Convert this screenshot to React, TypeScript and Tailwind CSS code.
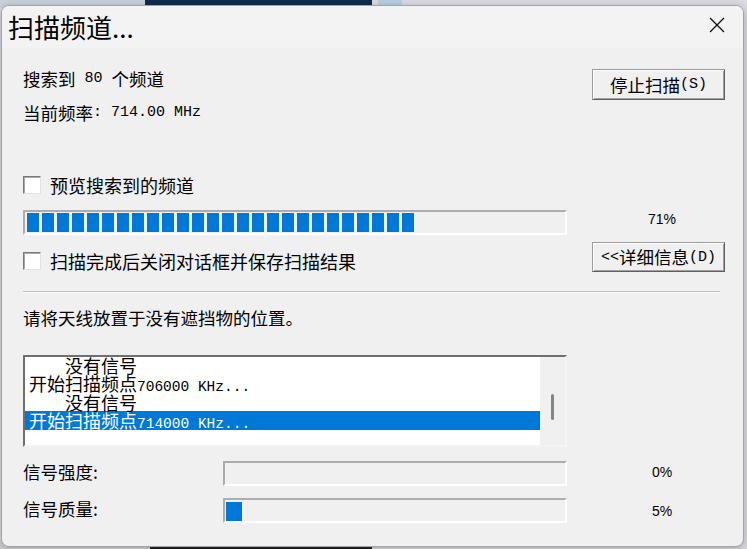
import type { ReactNode } from "react";

const cjk = "font-['Noto_Sans_CJK_SC','Microsoft_YaHei',sans-serif]";
const mono = "font-['Liberation_Mono','Noto_Sans_CJK_SC',monospace]";

function Checkbox() {
  return (
    <span className="block w-[18px] h-[18px] shrink-0 bg-white border border-t-[#7a7a7a] border-l-[#7a7a7a] border-b-[#e2e2e2] border-r-[#e2e2e2] shadow-[inset_1px_1px_0_#a8a8a8]" />
  );
}

function Btn({ children, h }: { children: ReactNode; h: string }) {
  return (
    <button
      className={`w-[133px] ${h} shrink-0 flex items-center justify-center bg-[#f0f0f0] border border-t-[#9c9c9c] border-l-[#9c9c9c] border-b-[#5f5f5f] border-r-[#5f5f5f] shadow-[inset_1px_1px_0_#ffffff,inset_-1px_-1px_0_#a0a0a0] text-[17.5px] leading-none text-black`}
    >
      {children}
    </button>
  );
}

function Pct({ value, extra = "" }: { value: string; extra?: string }) {
  return (
    <span
      className={`block ml-[75px] w-[40px] text-center text-[14px] leading-[14px] text-black font-['Liberation_Sans',sans-serif] ${extra}`}
    >
      {value}
    </span>
  );
}

function SunkenBar({ w, children }: { w: string; children?: ReactNode }) {
  return (
    <div
      className={`${w} h-[25px] shrink-0 bg-[#f0f0f0] border-2 border-t-[#adadad] border-l-[#adadad] border-b-white border-r-white`}
    >
      {children}
    </div>
  );
}

export default function App() {
  const blocks = Array.from({ length: 26 }, (_, i) => i);
  return (
    <div className={`relative w-[747px] h-[549px] overflow-hidden bg-[#dcdbe3] ${cjk}`}>
      {/* desktop behind the dialog */}
      <div className="absolute left-0 top-0 w-[145px] h-[8px] bg-[#c9d2da]" />
      <div className="absolute left-[145px] top-0 w-[227px] h-[8px] bg-[#102b4e]" />
      <div className="absolute left-[378px] top-0 w-[24px] h-[8px] bg-[#b9cfe4]" />
      <div className="absolute left-[150px] top-[540px] w-[222px] h-[9px] bg-[#252628]" />
      <div className="absolute left-0 top-[540px] w-[150px] h-[9px] bg-[#d2d2d6]" />

      {/* dialog window */}
      <div className="absolute left-[1px] top-[5px] w-[743px] h-[542px] rounded-[8px] border border-[#a3a3a3] bg-[#f0f0f0] overflow-hidden shadow-[0_2px_10px_rgba(0,0,0,0.25)] flex flex-col">
        <div className="h-[42px] shrink-0 bg-[#f3f3f3] flex items-start justify-between">
          <span className="ml-[6px] mt-[8px] text-[26px] leading-[26px] text-black">扫描频道...</span>
          <svg className="mt-[11px] mr-[18px]" width="16" height="16" viewBox="0 0 16 16">
            <path d="M1 1 L15 15 M15 1 L1 15" stroke="#111" strokeWidth="1.3" fill="none" />
          </svg>
        </div>

        <div className="flex-1 pl-[21px] pr-[18px] text-black">
          {/* status + stop */}
          <div className="h-[77px] flex justify-between">
            <div className="pt-[18.5px] text-[17.5px] leading-[24px]">
              <div className="flex">
                <span>搜索到</span>
                <span className={`${mono} text-[15px] whitespace-pre`}> 80 </span>
                <span>个频道</span>
              </div>
              <div className="mt-[10.5px] flex">
                <span>当前频率</span>
                <span className={`${mono} text-[15px] whitespace-pre`}>: 714.00 MHz</span>
              </div>
            </div>
            <div className="mt-[21px]">
              <Btn h="h-[31px]">
                停止扫描<span className={`${mono} text-[15px]`}>(S)</span>
              </Btn>
            </div>
          </div>

          {/* preview checkbox */}
          <div className="mt-[48px] h-[24px] flex items-center gap-[9px]">
            <Checkbox />
            <span className="text-[18px] leading-[24px]">预览搜索到的频道</span>
          </div>

          {/* scan progress */}
          <div className="mt-[13px] h-[25px] flex items-start">
            <SunkenBar w="w-[544px]">
              <div className="h-full pl-[2px] py-[1px] flex gap-[3px]">
                {blocks.map((b) => (
                  <span key={b} className="w-[12px] h-full bg-[#0078d7]" />
                ))}
              </div>
            </SunkenBar>
            <Pct value="71%" extra="mt-[2px]" />
          </div>

          {/* close checkbox + details */}
          <div className="mt-[7px] h-[30px] flex items-start justify-between">
            <div className="mt-[7px] h-[24px] flex items-center gap-[9px]">
              <Checkbox />
              <span className="text-[18px] leading-[24px]">扫描完成后关闭对话框并保存扫描结果</span>
            </div>
            <Btn h="h-[30px]">
              <span className={`${mono} text-[15px]`}>&lt;&lt;</span>详细信息
              <span className={`${mono} text-[15px]`}>(D)</span>
            </Btn>
          </div>

          <div className="mt-[19px] mr-[5px] h-[2px] border-t border-t-[#bdbdbd] border-b border-b-white" />

          <div className="mt-[13px] text-[17.5px] leading-[24px]">请将天线放置于没有遮挡物的位置。</div>

          {/* log list */}
          <div className="mt-[25px] w-[544px] h-[92px] flex bg-white border-2 border-t-[#6f6f6f] border-l-[#6f6f6f] border-b-[#f4f4f4] border-r-[#f4f4f4]">
            <div className="flex-1 overflow-hidden text-[18px]">
              <div className="-mt-[1.5px]">
                <div className="h-[18.5px] leading-[18.5px] pl-[40px] whitespace-nowrap">没有信号</div>
                <div className="h-[18.5px] leading-[18.5px] pl-[4px] whitespace-nowrap">
                  开始扫描频点<span className={`${mono} text-[14.5px]`}>706000 KHz...</span>
                </div>
                <div className="h-[18.5px] leading-[18.5px] pl-[40px] whitespace-nowrap">没有信号</div>
                <div className="h-[18.5px] leading-[18.5px] pl-[4px] whitespace-nowrap bg-[#0078d7] text-white">
                  开始扫描频点<span className={`${mono} text-[14.5px]`}>714000 KHz...</span>
                </div>
              </div>
            </div>
            <div className="w-[25px] shrink-0 bg-[#f0f0f0] flex justify-center">
              <span className="mt-[37px] w-[3px] h-[26px] rounded-full bg-[#858585]" />
            </div>
          </div>

          {/* signal strength */}
          <div className="mt-[14px] h-[24px] flex items-center">
            <span className="w-[200px] text-[17.5px] leading-[24px] -mt-[2px]">信号强度:</span>
            <SunkenBar w="w-[344px]" />
            <Pct value="0%" extra="-mt-[2px]" />
          </div>

          {/* signal quality */}
          <div className="mt-[13px] h-[25px] flex items-center">
            <span className="w-[200px] text-[17.5px] leading-[24px] -mt-[4px]">信号质量:</span>
            <SunkenBar w="w-[344px]">
              <div className="h-full pl-[1px] pt-[2px]">
                <span className="block w-[16px] h-[19px] bg-[#0078d7]" />
              </div>
            </SunkenBar>
            <Pct value="5%" />
          </div>
        </div>
      </div>
    </div>
  );
}
